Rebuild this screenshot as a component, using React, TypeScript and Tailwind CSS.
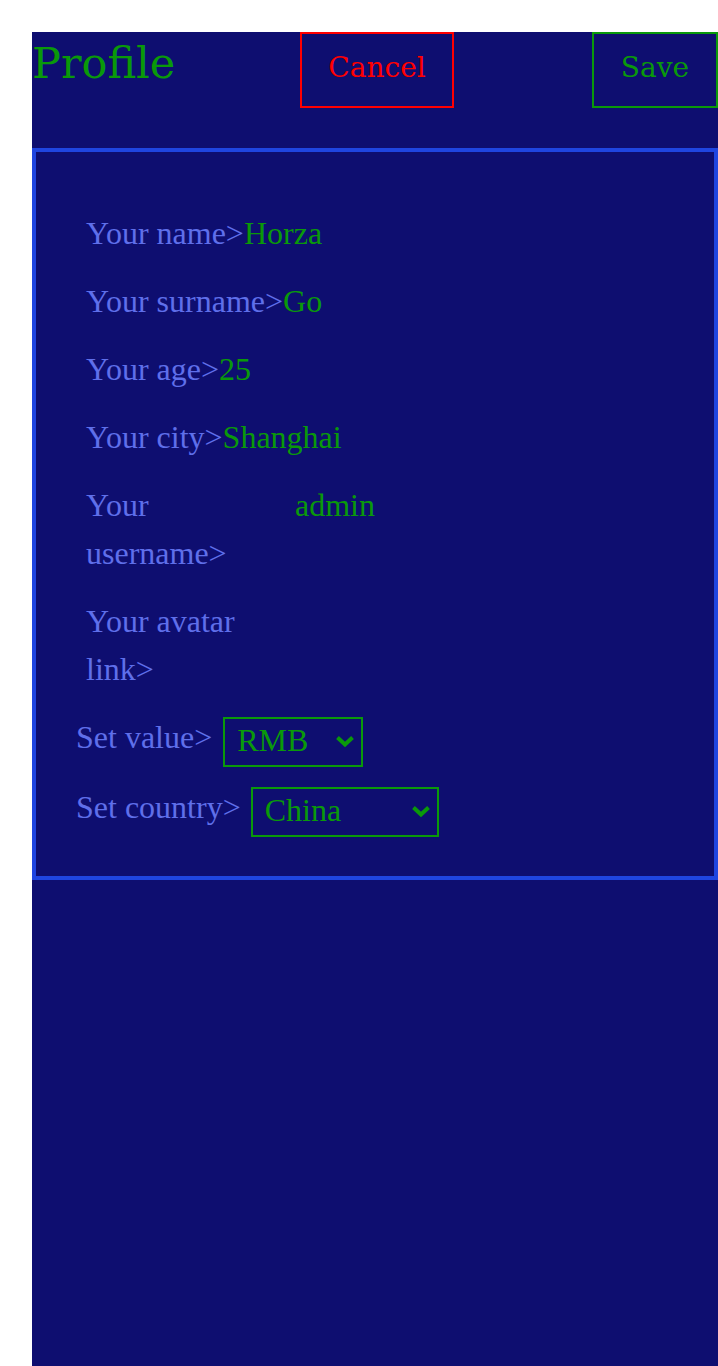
const fields = [
  { label: "Your name>", value: "Horza" },
  { label: "Your surname>", value: "Go" },
  { label: "Your age>", value: "25" },
  { label: "Your city>", value: "Shanghai" },
];

function Chevron() {
  return (
    <svg width="20" height="14" viewBox="0 0 20 14" className="pointer-events-none absolute right-[8px] top-1/2 -translate-y-1/2">
      <path d="M2.5 3.5 L10 10.5 L17.5 3.5" fill="none" stroke="#0a990a" strokeWidth="4" />
    </svg>
  );
}

function Select({ value, width }: { value: string; width: string }) {
  return (
    <div className={`relative h-[50px] ${width}`}>
      <select
        defaultValue={value}
        className="h-full w-full appearance-none border-2 border-[#0a990a] bg-transparent pl-[12px] pb-[3px] text-[32px] leading-none text-[#0a990a] outline-none"
      >
        <option value={value}>{value}</option>
      </select>
      <Chevron />
    </div>
  );
}

export default function App() {
  return (
    <div className="min-h-[1366px] bg-white pl-8 pt-8 font-['Liberation_Serif',serif]">
      <div className="min-h-[1334px] bg-[#0e0e70]">
        <div className="flex h-[116px] items-start justify-between">
          <h1 className="w-[130px] whitespace-nowrap font-['DejaVu_Serif',serif] text-[43px] leading-[62px] font-normal text-[#0a990a]">
            Profile
          </h1>
          <button className="flex h-[76px] w-[154px] items-center justify-center border-2 border-[#ff0000] pb-1 font-['DejaVu_Serif',serif] text-[28px] text-[#ff0000]">
            Cancel
          </button>
          <button className="flex h-[76px] w-[126px] items-center justify-center border-2 border-[#0a990a] pb-1 font-['DejaVu_Serif',serif] text-[28px] text-[#0a990a]">
            Save
          </button>
        </div>

        <div className="border-4 border-[#1f45e0] pb-10 pt-[57px] text-[32px] leading-[48px] text-[#5f6fea]">
          {fields.map((f) => (
            <div key={f.label} className="mb-5 pl-[50px]">
              {f.label}
              <span className="text-[#0a990a]">{f.value}</span>
            </div>
          ))}
          <div className="mb-5 flex pl-[50px]">
            <span className="w-[209px]">Your username&gt;</span>
            <span className="text-[#0a990a]">admin</span>
          </div>
          <div className="mb-[23px] flex pl-[50px]">
            <span className="w-[209px]">Your avatar link&gt;</span>
          </div>
          <div className="mb-5 flex items-center gap-[11px] pl-10">
            <span className="-mt-[8px]">Set value&gt;</span>
            <Select value="RMB" width="w-[140px]" />
          </div>
          <div className="flex items-center gap-[10px] pl-10">
            <span className="-mt-[8px]">Set country&gt;</span>
            <Select value="China" width="w-[188px]" />
          </div>
        </div>
      </div>
    </div>
  );
}
